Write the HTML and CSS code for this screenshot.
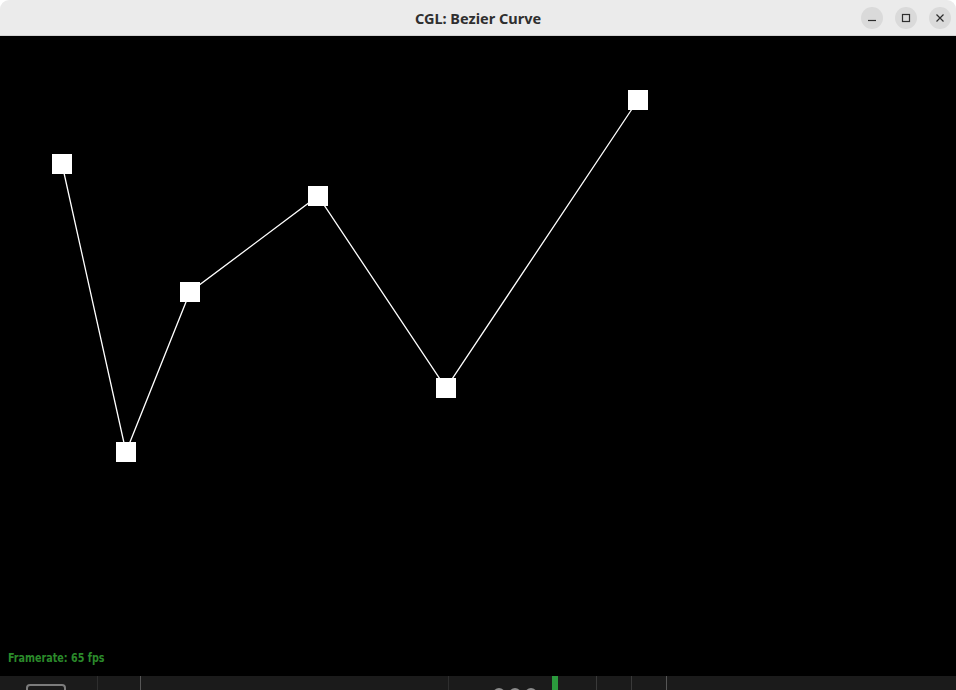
FILE: index.html
```html
<!DOCTYPE html>
<html>
<head>
<meta charset="utf-8">
<link rel="stylesheet" href="styles.css">
</head>
<body>
<div class="window">
  <header class="titlebar">
    <div class="title">CGL: Bezier Curve</div>
    <div class="controls">
      <span class="btn"><svg width="10" height="10" viewBox="0 0 10 10"><path d="M1 7.5h8" stroke="#2e2e2e" stroke-width="1.2"/></svg></span>
      <span class="btn"><svg width="10" height="10" viewBox="0 0 10 10"><rect x="1.5" y="1.5" width="7" height="7" fill="none" stroke="#2e2e2e" stroke-width="1.2"/></svg></span>
      <span class="btn"><svg width="10" height="10" viewBox="0 0 10 10"><path d="M1.5 1.5l7 7M8.5 1.5l-7 7" stroke="#2e2e2e" stroke-width="1.2"/></svg></span>
    </div>
  </header>
  <main class="canvas">
    <svg class="scene" width="956" height="640" viewBox="0 0 956 640">
      <polyline points="62,128 126,416 190,256 318,160 446,352 638,64" fill="none" stroke="#fff" stroke-width="1.3"/>
      <g fill="#fff">
        <rect x="52" y="118" width="20" height="20"/>
        <rect x="116" y="406" width="20" height="20"/>
        <rect x="180" y="246" width="20" height="20"/>
        <rect x="308" y="150" width="20" height="20"/>
        <rect x="436" y="342" width="20" height="20"/>
        <rect x="628" y="54" width="20" height="20"/>
      </g>
    </svg>
    <div class="fps">Framerate: 65 fps</div>
  </main>
  <footer class="taskbar">
    <span class="outline"></span>
    <span class="sep dark s1"></span>
    <span class="sep light s2"></span>
    <span class="sep dark s3"></span>
    <span class="dots"><i></i><i></i><i></i></span>
    <span class="green"></span>
    <span class="sep mid s4"></span>
    <span class="sep mid s5"></span>
    <span class="sep light s6"></span>
  </footer>
</div>
</body>
</html>
```
FILE: styles.css
```css
html, body {
  margin: 0;
  padding: 0;
  background: #ffffff;
}
.window {
  width: 956px;
  height: 690px;
  display: flex;
  flex-direction: column;
  overflow: hidden;
}
.titlebar {
  height: 35px;
  flex: none;
  background: #ebebeb;
  border-bottom: 1px solid #d4d4d4;
  border-radius: 9px 9px 0 0;
  display: flex;
  align-items: center;
  justify-content: center;
  position: relative;
}
.title {
  font-family: "Noto Sans", "DejaVu Sans", sans-serif;
  font-weight: 700;
  font-size: 14.5px;
  color: #2f2f2f;
  padding-top: 1px;
}
.controls {
  position: absolute;
  right: 5px;
  top: 7px;
  display: flex;
  gap: 12px;
}
.btn {
  width: 22px;
  height: 22px;
  border-radius: 50%;
  background: #dadada;
  display: flex;
  align-items: center;
  justify-content: center;
}
.canvas {
  flex: none;
  height: 640px;
  background: #000;
  position: relative;
}
.scene {
  display: block;
}
.fps {
  position: absolute;
  left: 8px;
  top: 614px;
  font-family: "DejaVu Sans", sans-serif;
  font-stretch: condensed;
  font-weight: 700;
  font-size: 13px;
  color: #2b8a2b;
  transform: scaleX(0.82);
  transform-origin: left top;
  white-space: nowrap;
}
.taskbar {
  flex: none;
  height: 14px;
  background: #1b1b1b;
  display: flex;
  align-items: flex-start;
}
.outline {
  margin-left: 26px;
  margin-top: 8px;
  width: 36px;
  height: 10px;
  border: 2px solid #7c7c7c;
  border-radius: 4px;
  flex: none;
}
.sep {
  width: 1px;
  height: 14px;
  flex: none;
}
.dark { background: #2e2e2e; }
.mid { background: #3a3a3a; }
.light { background: #565656; }
.s1 { margin-left: 31px; }
.s2 { margin-left: 42px; }
.s3 { margin-left: 307px; }
.dots {
  margin-left: 44px;
  margin-top: 12px;
  display: flex;
  gap: 4px;
  flex: none;
}
.dots i {
  width: 12px;
  height: 12px;
  border-radius: 50%;
  background: #8a8a8a;
  display: block;
}
.green {
  margin-left: 15px;
  width: 6px;
  height: 14px;
  background: #2b9a3d;
  flex: none;
}
.s4 { margin-left: 38px; }
.s5 { margin-left: 34px; }
.s6 { margin-left: 34px; }
```
